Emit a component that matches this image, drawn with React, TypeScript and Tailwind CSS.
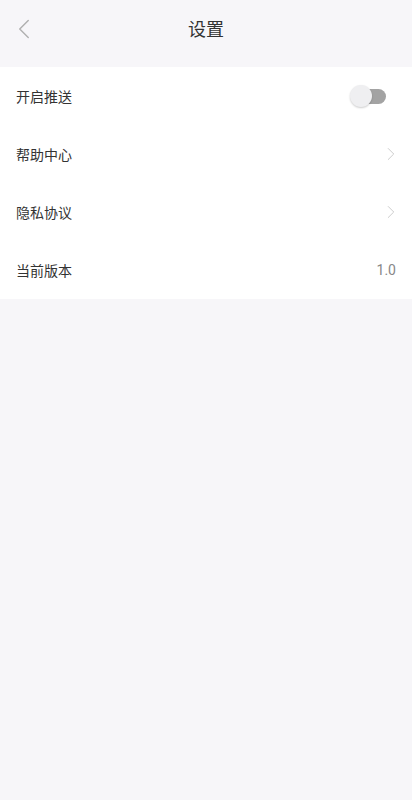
import { ChevronRight, ChevronLeft } from "lucide-react";

const font = { fontFamily: '"Noto Sans CJK SC", "Noto Sans", sans-serif' };

function Row({ label, children }: { label: string; children?: React.ReactNode }) {
  return (
    <div className="h-[58px] flex items-center justify-between pl-4 pr-4 bg-white">
      <span className="text-[14px] text-[#333]">{label}</span>
      {children}
    </div>
  );
}

export default function App() {
  return (
    <div className="min-h-[800px] bg-[#f7f6f9]" style={font}>
      {/* header */}
      <div className="h-[62px] relative flex items-center justify-center pb-[6px]">
        <ChevronLeft className="absolute left-[7px] top-[12px] w-[34px] h-[34px] text-[#b0b0b0]" strokeWidth={1} />
        <span className="text-[18px] text-[#333]">设置</span>
      </div>

      <div className="mt-[5px] flex flex-col">
        <Row label="开启推送">
          <div className="relative w-[36px] h-[22px] mr-[10px] flex items-center">
            <div className="absolute left-[6px] right-0 h-[15px] rounded-full bg-[#a3a3a3]" />
            <div className="absolute left-0 w-[22px] h-[22px] rounded-full bg-[#efeff1] shadow-[0_1px_2px_rgba(0,0,0,0.2)]" />
          </div>
        </Row>
        <Row label="帮助中心">
          <ChevronRight className="w-[22px] h-[22px] text-[#c8c8c8] mr-[-6px]" strokeWidth={1} />
        </Row>
        <Row label="隐私协议">
          <ChevronRight className="w-[22px] h-[22px] text-[#c8c8c8] mr-[-6px]" strokeWidth={1} />
        </Row>
        <Row label="当前版本">
          <span className="text-[14px] text-[#888]" style={{ fontFamily: '"Roboto", sans-serif' }}>1.0</span>
        </Row>
      </div>
    </div>
  );
}
